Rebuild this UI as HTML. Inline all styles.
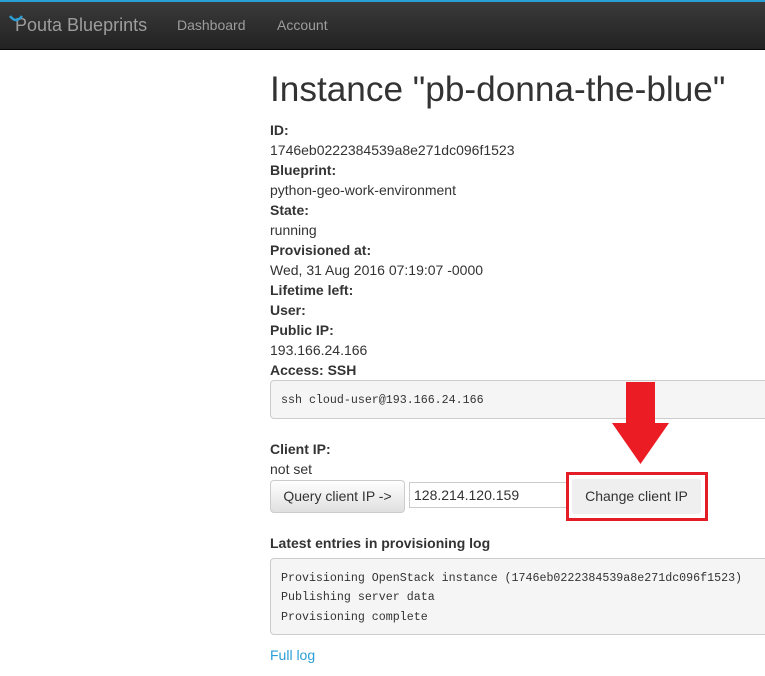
<!DOCTYPE html>
<html><head><style>
body{margin:0;width:765px;height:676px;overflow:hidden;background:#fff;font-family:"Liberation Sans",sans-serif;font-size:14px;color:#333;position:relative}
.nav{position:absolute;top:0;left:0;width:765px;height:50px;background:linear-gradient(#3a3a3a,#222);border-top:2px solid #2a9fd6;box-sizing:border-box;border-bottom:1px solid #080808}
.nav span{position:absolute;top:15px;color:#9d9d9d}
h1{position:absolute;left:270px;top:70px;margin:0;font-weight:normal;font-size:35.2px;line-height:40px}
.l{position:absolute;left:270px;line-height:20px}
b{font-weight:bold}
pre{position:absolute;margin:0;left:270px;width:520px;background:#f5f5f5;border:1px solid #ccc;border-radius:4px;font-family:"Liberation Mono",monospace;font-size:11.65px;color:#333;box-sizing:border-box}
.btn{position:absolute;background:linear-gradient(#fff,#e0e0e0);border:1px solid #ccc;border-radius:4px;box-sizing:border-box;text-align:center;line-height:30px}
</style></head><body>
<div class="nav">
<span style="left:15px;top:13px;font-size:18px;">Pouta Blueprints</span>
<svg style="position:absolute;left:9px;top:13px" width="14" height="10"><path d="M1 1 Q7 9 13 1" stroke="#2a9fd6" stroke-width="2.5" fill="none"/></svg>
<span style="left:177px">Dashboard</span>
<span style="left:277px">Account</span>
</div>
<h1>Instance "pb-donna-the-blue"</h1>
<div class="l" style="top:120px"><b>ID:</b><br>1746eb0222384539a8e271dc096f1523<br><b>Blueprint:</b><br>python-geo-work-environment<br><b>State:</b><br>running<br><b>Provisioned at:</b><br>Wed, 31 Aug 2016 07:19:07 -0000<br><b>Lifetime left:</b><br><b>User:</b><br><b>Public IP:</b><br>193.166.24.166<br><b>Access: SSH</b></div>
<pre style="top:380px;height:39px;padding:12px 10px;line-height:16px">ssh cloud-user@193.166.24.166</pre>
<div class="l" style="top:439px"><b>Client IP:</b><br>not set</div>
<div class="btn" style="left:270px;top:480px;width:135px;height:33px;font-size:14px">Query client IP -&gt;</div>
<div style="position:absolute;left:409px;top:482px;width:160px;height:26px;border:1px solid #ccc;box-sizing:border-box;padding-left:4px;line-height:24px;font-size:14px">128.214.120.159</div>
<div style="position:absolute;left:572px;top:479px;width:129px;height:35px;background:#efefef;border-radius:3px;text-align:center;line-height:35px">Change client IP</div>
<div style="position:absolute;left:566px;top:472px;width:142px;height:49px;border:3px solid #e31c25;box-sizing:border-box"></div>
<svg style="position:absolute;left:610px;top:382px" width="62" height="84"><path d="M16 0H45V41H59L30.5 82L2 41H16Z" fill="#ec1c24"/></svg>
<div class="l" style="top:533px"><b>Latest entries in provisioning log</b></div>
<pre style="top:558px;height:77px;padding:10px 10px;line-height:19.3px">Provisioning OpenStack instance (1746eb0222384539a8e271dc096f1523)
Publishing server data
Provisioning complete</pre>
<div class="l" style="top:645px;color:#2a9fd6">Full log</div>
</body></html>
